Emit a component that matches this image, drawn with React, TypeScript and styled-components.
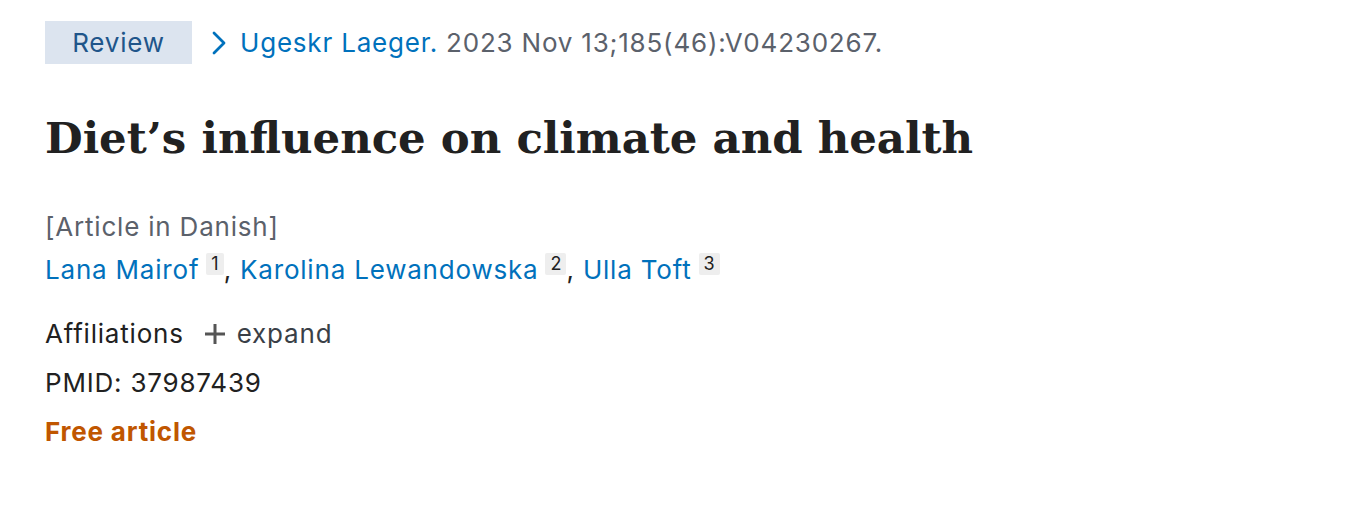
import React from "react";
import styled, { createGlobalStyle } from "styled-components";

let colors = {
  text: "#212121",
  gray: "#5b616b",
  link: "#0071bc",
  badgeBg: "#dce4ef",
  badgeText: "#20558a",
  orange: "#c05600",
  supBg: "#eeeeee",
};

let GlobalStyle = createGlobalStyle`
  body {
    margin: 0;
    background: #ffffff;
    font-family: Inter, "Open Sans", "Liberation Sans", sans-serif;
    color: ${colors.text};
  }
`;

let Page = styled.main`
  padding: 21px 45px;
  font-size: 26px;
  letter-spacing: 0.8px;
`;

let TopRow = styled.div`
  display: flex;
  align-items: center;
  gap: 20px;
  height: 43px;
`;

let Badge = styled.span`
  display: inline-flex;
  align-items: center;
  justify-content: center;
  width: 147px;
  height: 43px;
  background: ${colors.badgeBg};
  color: ${colors.badgeText};
`;

let Cite = styled.div`
  display: flex;
  align-items: center;
  gap: 14px;
  color: ${colors.gray};
`;

let Link = styled.a`
  color: ${colors.link};
  text-decoration: none;
`;

let Title = styled.h1`
  margin: 0;
  padding-top: 44px;
  font-family: "DejaVu Serif", "Liberation Serif", serif;
  font-weight: 700;
  font-size: 43.4px;
  letter-spacing: 0;
  line-height: 60px;
  color: ${colors.text};
`;

let Meta = styled.div`
  margin-top: 37px;
  line-height: 43px;
`;

let Lang = styled.div`
  color: ${colors.gray};
`;

let Authors = styled.div`
  color: ${colors.text};
`;

let Sup = styled.sup`
  display: inline-block;
  margin-left: 7px;
  padding: 0 5px;
  background: ${colors.supBg};
  color: ${colors.text};
  font-size: 18px;
  letter-spacing: 0;
  line-height: 22px;
  border-radius: 2px;
  vertical-align: 9px;
`;

let Section = styled.div`
  margin-top: 18px;
  display: flex;
  flex-direction: column;
`;

let Row = styled.div`
  display: flex;
  align-items: center;
  line-height: 49px;
`;

let Expand = styled.span`
  display: inline-flex;
  align-items: center;
  gap: 11px;
  margin-left: 20px;
  color: #3a3f47;
`;

let Free = styled.div`
  color: ${colors.orange};
  font-weight: 700;
  line-height: 49px;
`;

let Chevron = () => (
  <svg width="14" height="24" viewBox="0 0 14 24">
    <path d="M2 2 L12 12 L2 22" fill="none" stroke={colors.link} strokeWidth="2.8" strokeLinecap="round" strokeLinejoin="round" />
  </svg>
);

let Plus = () => (
  <svg width="22" height="22" viewBox="0 0 22 22">
    <path d="M11 1 V21 M1 11 H21" stroke="#555" strokeWidth="3" />
  </svg>
);

let authors = [
  { name: "Lana Mairof", n: 1 },
  { name: "Karolina Lewandowska", n: 2 },
  { name: "Ulla Toft", n: 3 },
];

let App = () => {
  return (
    <>
      <GlobalStyle />
      <Page>
        <TopRow>
          <Badge>Review</Badge>
          <Cite>
            <Chevron />
            <span>
              <Link href="#">Ugeskr Laeger.</Link> 2023 Nov 13;185(46):V04230267.
            </span>
          </Cite>
        </TopRow>
        <Title>Diet’s influence on climate and health</Title>
        <Meta>
          <Lang>[Article in Danish]</Lang>
          <Authors>
            {authors.map((a, i) => (
              <React.Fragment key={a.name}>
                <Link href="#">{a.name}</Link>
                <Sup>{a.n}</Sup>
                {i < authors.length - 1 ? ", " : ""}
              </React.Fragment>
            ))}
          </Authors>
        </Meta>
        <Section>
          <Row>
            Affiliations
            <Expand>
              <Plus />
              expand
            </Expand>
          </Row>
          <Row>PMID: 37987439</Row>
          <Free>Free article</Free>
        </Section>
      </Page>
    </>
  );
};

export default App;
